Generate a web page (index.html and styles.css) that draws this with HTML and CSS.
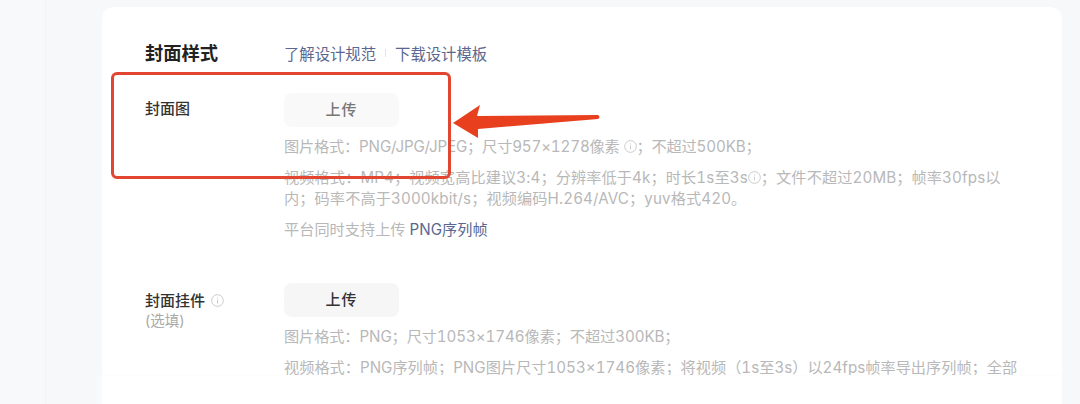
FILE: index.html
```html
<!DOCTYPE html>
<html lang="zh-CN">
<head>
<meta charset="utf-8">
<title>封面样式</title>
<link rel="stylesheet" href="styles.css">
</head>
<body>
<div class="page">
  <aside class="side"></aside>
  <main class="card">
    <header class="head">
      <h2 class="title">封面样式</h2>
      <nav class="links"><a>了解设计规范</a><i class="sep"></i><a>下载设计模板</a></nav>
    </header>
    <section class="row first">
      <div class="label">封面图</div>
      <div class="body">
        <button class="upload dim">上传</button>
        <p class="hint h1">图片格式：PNG/JPG/JPEG；尺寸957×1278像素 <svg class="info" viewBox="0 0 12 12"><circle cx="6" cy="6" r="5.4"/><path d="M6 5.2v3.6M6 3.2v1"/></svg>；不超过500KB；</p>
        <p class="hint wide">视频格式：MP4；视频宽高比建议3:4；分辨率低于4k；时长1s至3s<svg class="info" viewBox="0 0 12 12"><circle cx="6" cy="6" r="5.4"/><path d="M6 5.2v3.6M6 3.2v1"/></svg>；文件不超过20MB；帧率30fps以内；码率不高于3000kbit/s；视频编码H.264/AVC；yuv格式420。</p>
        <p class="hint">平台同时支持上传 <a class="seq">PNG序列帧</a></p>
      </div>
    </section>
    <section class="row second">
      <div class="label lower">封面挂件 <svg class="info" viewBox="0 0 12 12"><circle cx="6" cy="6" r="5.4"/><path d="M6 5.2v3.6M6 3.2v1"/></svg><small>(选填)</small></div>
      <div class="body">
        <button class="upload">上传</button>
        <p class="hint h2">图片格式：PNG；尺寸1053×1746像素；不超过300KB；</p>
        <p class="hint">视频格式：PNG序列帧；PNG图片尺寸1053×1746像素；将视频（1s至3s）以24fps帧率导出序列帧；全部</p>
      </div>
    </section>
  </main>
  <div class="footer"></div>
  <div class="redbox"></div>
  <svg class="arrow" viewBox="0 0 150 48"><path d="M0 26 L27 8 L24 19 L145 18 Q148 20 145 22 L25 32 L25 41 Z"/></svg>
</div>
</body>
</html>
```
FILE: styles.css
```css
* { box-sizing: border-box; }
html, body { margin: 0; height: 100%; }
body {
  background: #f7f8fa;
  font-family: "Inter", "Noto Sans CJK SC", "Noto Sans", sans-serif;
  text-spacing-trim: space-all;
  overflow: hidden;
}
.page { position: relative; width: 1080px; height: 404px; overflow: hidden; display: flex; }
.side { width: 46px; height: 404px; border-right: 1px solid #f1f2f4; background: #f8f9fb; }
.card {
  margin: 7px 0 0 56px;
  width: 960px;
  height: 420px;
  background: #fff;
  border-radius: 12px;
  padding: 32px 0 0 43px;
}
.head { display: flex; align-items: center; height: 28px; }
.title { margin: 0; width: 139px; font-size: 18.3px; line-height: 28px; font-weight: 600; color: #222; }
.links { display: flex; align-items: center; font-size: 15.35px; color: #5a678f; }
.sep { width: 1px; height: 8px; background: #e3e4ea; margin: 0 9px; }
.row { display: flex; }
.first { margin-top: 26px; }
.second { margin-top: 43px; }
.label { width: 139px; padding-top: 5px; font-size: 15px; line-height: 21px; font-weight: 500; color: #333; }
.label.lower { padding-top: 7px; }
.label small { display: block; font-size: 14.5px; line-height: 20px; font-weight: 400; color: #aaa; }
.label .info { margin-left: 2px; }
.body { width: 736px; }
.upload {
  display: block;
  width: 115px;
  height: 34px;
  border: 0;
  border-radius: 8px;
  background: #f6f6f6;
  padding: 0 0 3px;
  font: 500 15px "Noto Sans CJK SC", sans-serif;
  letter-spacing: 1px;
  color: #333;
}
.upload.dim { background: #f9f9f9; color: #777; }
.hint { margin: 10px 0 0; font-size: 15.2px; line-height: 21px; color: #b8b8b8; font-variant-numeric: tabular-nums; }
.hint.h1 { margin-top: 9px; letter-spacing: -0.17px; }
.hint.h2 { margin-top: 9px; letter-spacing: -0.1px; }
.hint.wide { letter-spacing: 0.1px; }
.seq { color: #5a678f; }
.info { display: inline-block; width: 13px; height: 13px; vertical-align: -1px; fill: none; stroke: #c4c4c4; stroke-width: 0.8; }
.footer { position: absolute; left: 102px; top: 376px; width: 960px; height: 28px; background: #fff; box-shadow: -5px 0 0 #f9fafb, 0 -1px 0 #fdfdfd; }
.redbox { position: absolute; left: 111px; top: 72px; width: 340px; height: 107px; border: 3px solid #e24630; border-radius: 6px; }
.arrow { position: absolute; left: 453px; top: 97px; width: 150px; height: 48px; fill: #e8401f; }
```
